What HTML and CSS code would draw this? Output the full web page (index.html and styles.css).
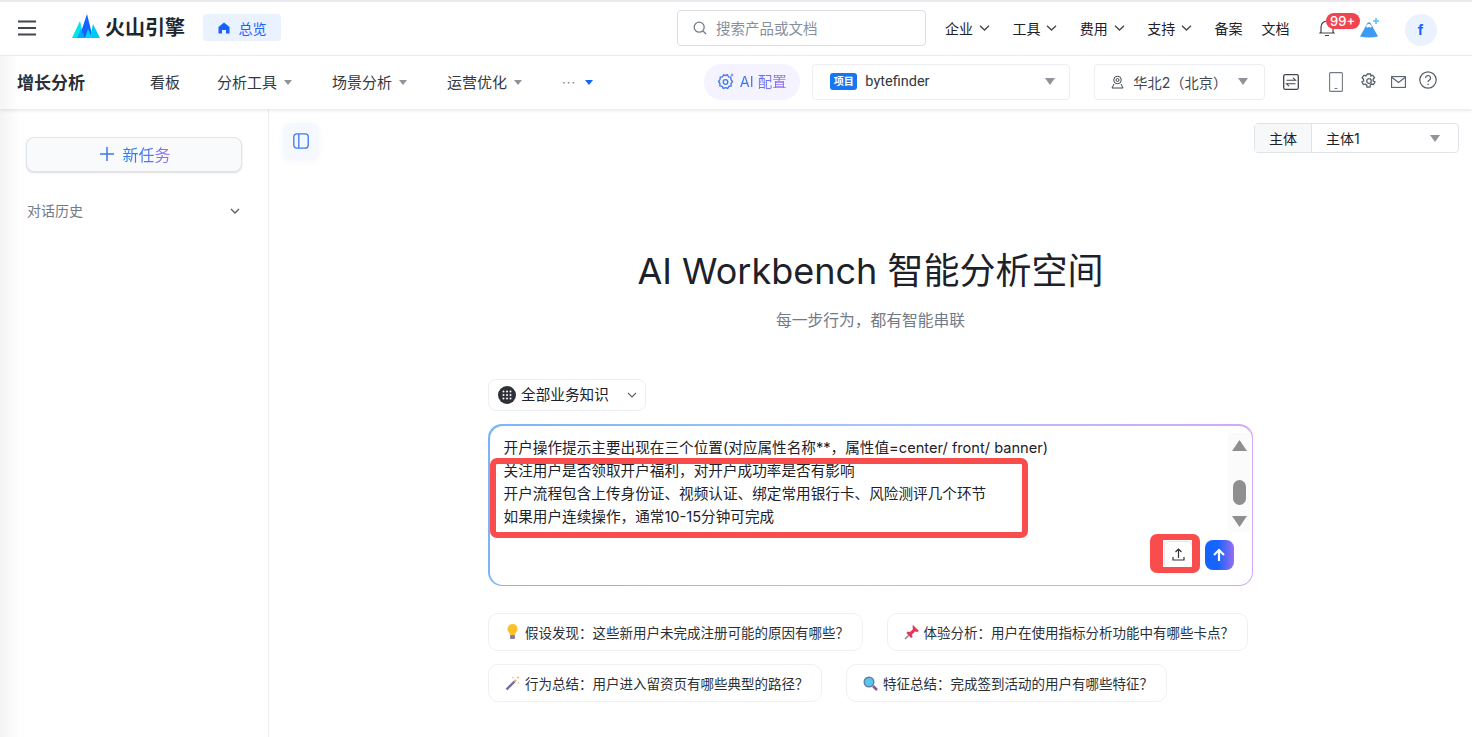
FILE: index.html
```html
<!DOCTYPE html>
<html lang="zh-CN">
<head>
<meta charset="utf-8">
<title>AI Workbench</title>
<link rel="stylesheet" href="styles.css">
</head>
<body>
<header class="top">
  <svg class="burger" width="20" height="16" viewBox="0 0 20 16"><path d="M1 1.500h18M1 8h18M1 14.500h18" stroke="#41464f" stroke-width="1.800" fill="none"/></svg>
  <svg class="logo" width="28" height="25" viewBox="0 0 28 25"><path d="M0 24 8 7l4 17z" fill="#00e5e5"/><path d="M7 24 15 0l6 24z" fill="#1664ff"/><path d="M18 24l3-14 7 14z" fill="#00c8f0"/><path d="M5 24l4-9 4 9z" fill="#00a6ff"/><path d="M13 24l3-9 4 9z" fill="#00d5f5"/></svg>
  <span class="brand">火山引擎</span>
  <span class="home"><svg width="12" height="12" viewBox="0 0 12 12"><path d="M6 .5 11.500 5v6.500H8V8H4v3.500H.5V5z" fill="#1664ff"/></svg>总览</span>
  <div class="search"><svg width="14" height="14" viewBox="0 0 14 14"><circle cx="6.200" cy="6.200" r="5" stroke="#737a87" stroke-width="1.300" fill="none"/><path d="m10 10 3 3" stroke="#737a87" stroke-width="1.300"/></svg><span>搜索产品或文档</span></div>
  <nav class="links">
    <a class="lnk">企业<svg class="chev" width="11" height="6" viewBox="0 0 11 6"><path d="m1 .7 4.500 4.300L10 .7" stroke="#41464f" stroke-width="1.300" fill="none"/></svg></a>
    <a class="lnk">工具<svg class="chev" width="11" height="6" viewBox="0 0 11 6"><path d="m1 .7 4.500 4.300L10 .7" stroke="#41464f" stroke-width="1.300" fill="none"/></svg></a>
    <a class="lnk">费用<svg class="chev" width="11" height="6" viewBox="0 0 11 6"><path d="m1 .7 4.500 4.300L10 .7" stroke="#41464f" stroke-width="1.300" fill="none"/></svg></a>
    <a class="lnk">支持<svg class="chev" width="11" height="6" viewBox="0 0 11 6"><path d="m1 .7 4.500 4.300L10 .7" stroke="#41464f" stroke-width="1.300" fill="none"/></svg></a>
    <a class="lnk">备案</a>
    <a class="lnk">文档</a>
  </nav>
  <div class="bell">
    <svg width="16" height="18" viewBox="0 0 16 18"><path d="M2 13V8a6 6 0 0 1 12 0v5l1 1H1zM6 16.500h4" stroke="#41464f" stroke-width="1.200" fill="none"/></svg>
    <span class="badge">99+</span>
  </div>
  <svg class="mount" width="20" height="20" viewBox="0 0 20 20"><path d="M0 18.500 7.500 5q1.500-1.500 3 0l7.500 13.500q-9 2-18 0z" fill="#3b9bf5"/><path d="M5.800 8.500q3-5.500 6.200 0l-1.600 1.300-1.400-1-1.500 1z" fill="#fff"/><path d="M16 0v6M13 3h6" stroke="#5cc0f5" stroke-width="1.600"/></svg>
  <span class="avatar">f</span>
</header>

<div class="sub">
  <span class="product">增长分析</span>
  <a class="item first">看板</a>
  <a class="item">分析工具<i class="tri small"></i></a>
  <a class="item">场景分析<i class="tri small"></i></a>
  <a class="item">运营优化<i class="tri small"></i></a>
  <a class="item dots">···<i class="tri small blue"></i></a>
  <span class="aibtn">
    <svg width="17" height="18" viewBox="0 0 17 18"><path d="M7 2.500 9.500 1.800 10.500 4l2.200.2.300 2.500 1.500 1.800-1.500 2 .2 2.400-2.300.5-1.200 2-2.200-.8-2.200.8-1.200-2-2.300-.6.200-2.300L.5 8.500l1.500-1.900.3-2.400L4.500 4l1-2.200z" stroke="#3c78f0" stroke-width="1.300" fill="none"/><circle cx="7.500" cy="9" r="2.300" stroke="#3c78f0" stroke-width="1.300" fill="none"/><path d="M14 0l.6 1.400L16 2l-1.400.6L14 4l-.6-1.400L12 2l1.400-.6z" fill="#8a6cf5"/></svg>
    <span class="aitext">AI 配置</span>
  </span>
  <div class="proj"><span class="tag">项目</span><span class="pname">bytefinder</span><i class="tri"></i></div>
  <div class="region">
    <svg width="13" height="14" viewBox="0 0 13 14"><circle cx="6.500" cy="5" r="3.800" stroke="#41464f" fill="none"/><circle cx="6.500" cy="5" r="1.500" stroke="#41464f" fill="none"/><path d="M3 9 1 13h11l-2-4" stroke="#41464f" fill="none"/></svg>
    <span class="rname">华北2（北京）</span><i class="tri"></i>
  </div>
  <svg class="ic swap" width="16" height="16" viewBox="0 0 16 16"><rect x=".7" y=".7" width="14.600" height="14.600" rx="1.500" stroke="#41464f" stroke-width="1.300" fill="none"/><path d="M3.500 6.200h9L10 3.800M12.500 9.800h-9L6 12.200" stroke="#41464f" stroke-width="1.100" fill="none"/></svg>
  <svg class="ic phone" width="14" height="20" viewBox="0 0 14 20"><rect x=".6" y=".6" width="12.800" height="18.800" rx="1" stroke="#737a87" stroke-width="1.100" fill="none"/><path d="M5.500 16.500h3" stroke="#737a87"/></svg>
  <svg class="ic gear" width="16" height="16" viewBox="0 0 16 16"><path d="M6.500 1h3l.4 2 1.800-.8 1.800 2.500-1.400 1.500.1 1.700 1.800 1-1.500 2.600-1.900-.5-1.400 1.100-.2 2h-3l-.2-2-1.500-1-1.900.5L.9 9l1.700-1-.1-1.700L1.100 4.800 3 2.200l1.900.8z" stroke="#565e6a" stroke-width="1.300" fill="none"/><circle cx="8" cy="8" r="2.300" stroke="#565e6a" stroke-width="1.300" fill="none"/></svg>
  <svg class="ic mail" width="15" height="12" viewBox="0 0 15 12"><rect x=".6" y=".6" width="13.800" height="10.800" stroke="#565e6a" stroke-width="1.100" fill="none"/><path d="m1 1.500 6.500 5 6.500-5" stroke="#565e6a" stroke-width="1.100" fill="none"/></svg>
  <svg class="ic help" width="18" height="18" viewBox="0 0 18 18"><circle cx="9" cy="9" r="8.200" stroke="#565e6a" stroke-width="1.200" fill="none"/><path d="M6.500 7a2.500 2.500 0 1 1 3.700 2.200c-.8.500-1.200.9-1.200 1.900" stroke="#565e6a" stroke-width="1.200" fill="none"/><circle cx="9" cy="13.300" r=".8" fill="#565e6a"/></svg>
</div>

<div class="layout">
  <aside class="side">
    <button class="newtask"><svg width="14" height="14" viewBox="0 0 14 14"><path d="M7 0v14M0 7h14" stroke="#3c78f0" stroke-width="1.500"/></svg><span class="gradtext">新任务</span></button>
    <div class="hist"><span>对话历史</span><svg class="histchev" width="10" height="6" viewBox="0 0 10 6"><path d="m1 1 4 4 4-4" stroke="#565e6a" stroke-width="1.300" fill="none"/></svg></div>
  </aside>
  <main class="main">
    <div class="tools">
      <span class="toggle"><svg width="16" height="16" viewBox="0 0 16 16"><rect x=".8" y=".8" width="14.400" height="14.400" rx="3" stroke="#3c78f0" stroke-width="1.300" fill="none"/><path d="M5.800 1v14" stroke="#3c78f0" stroke-width="1.300"/></svg></span>
      <div class="entity"><span class="elabel">主体</span><span class="evalue">主体1<i class="tri"></i></span></div>
    </div>
    <h1 class="title">AI Workbench 智能分析空间</h1>
    <p class="subtitle">每一步行为，都有智能串联</p>
    <div class="column">
      <div class="kb"><span class="kbdot"><svg width="10" height="10" viewBox="0 0 10 10" fill="#fff"><circle cx="1.500" cy="1.500" r="1"/><circle cx="5" cy="1.500" r="1"/><circle cx="8.500" cy="1.500" r="1"/><circle cx="1.500" cy="5" r="1"/><circle cx="5" cy="5" r="1"/><circle cx="8.500" cy="5" r="1"/><circle cx="1.500" cy="8.500" r="1"/><circle cx="5" cy="8.500" r="1"/><circle cx="8.500" cy="8.500" r="1"/></svg></span><span class="kbtext">全部业务知识</span><svg class="kbchev" width="10" height="6" viewBox="0 0 10 6"><path d="m1 1 4 4 4-4" stroke="#565e6a" stroke-width="1.100" fill="none"/></svg></div>
      <div class="composer">
        <div class="inner">
          <div class="lines">
            <div>开户操作提示主要出现在三个位置(对应属性名称**，属性值=center/ front/ banner)</div>
            <div>关注用户是否领取开户福利，对开户成功率是否有影响</div>
            <div>开户流程包含上传身份证、视频认证、绑定常用银行卡、风险测评几个环节</div>
            <div>如果用户连续操作，通常10-15分钟可完成</div>
          </div>
          <div class="scroll">
            <svg width="15" height="11" viewBox="0 0 15 11"><path d="M7.500 0 15 11H0z" fill="#8f8f8f"/></svg>
            <span class="thumb"></span>
            <svg width="15" height="11" viewBox="0 0 15 11"><path d="M7.500 11 15 0H0z" fill="#8f8f8f"/></svg>
          </div>
          <div class="actions">
            <span class="upload"><svg width="13" height="13" viewBox="0 0 13 13"><path d="M6.500 10V1.500M3.500 4l3-3 3 3M1 9v3h11V9" stroke="#333" stroke-width="1.200" fill="none"/></svg></span>
            <span class="send"><svg width="14" height="14" viewBox="0 0 14 14"><path d="M7 13V2M2 7l5-5 5 5" stroke="#fff" stroke-width="2.200" fill="none"/></svg></span>
          </div>
          <span class="mark mark-text"></span>
          <span class="mark mark-btn"></span>
        </div>
      </div>
      <div class="chips">
        <span class="chip"><svg width="15" height="16" viewBox="0 0 14 16"><path d="M7 0a5 5 0 0 1 3 9l-.5 2h-5L4 9a5 5 0 0 1 3-9z" fill="#fbc02d"/><rect x="4.500" y="11" width="5" height="4" rx="1" fill="#8d7aa8"/></svg>假设发现：这些新用户未完成注册可能的原因有哪些？</span>
        <span class="chip"><svg width="15" height="15" viewBox="0 0 15 15"><path d="m9 0 6 6-2 1-2-.5-3 3 .5 2.500-1.500 1L2.500 8l1-1.500L6 7l3-3-.5-2z" fill="#e8335a"/><path d="m5 10-4 4" stroke="#8a7f8a" stroke-width="1.500"/></svg>体验分析：用户在使用指标分析功能中有哪些卡点？</span>
        <span class="chip"><svg width="15" height="15" viewBox="0 0 15 15"><path d="m1.500 13.500 8-8" stroke="#7a6aa0" stroke-width="2.400"/><path d="m9.500 5.500 1.500-1.500" stroke="#e8b070" stroke-width="2.400"/><circle cx="13" cy="1.500" r="1" fill="#f2b36b"/><circle cx="8" cy="1.500" r=".8" fill="#f2b36b"/><circle cx="13.500" cy="7" r=".8" fill="#f2b36b"/></svg>行为总结：用户进入留资页有哪些典型的路径？</span>
        <span class="chip"><svg width="15" height="15" viewBox="0 0 15 15"><circle cx="6" cy="6" r="4.800" fill="#58c6ec" stroke="#5d7fa6" stroke-width="1.400"/><path d="m10 10 4 4" stroke="#8a5aa0" stroke-width="2.600"/></svg>特征总结：完成签到活动的用户有哪些特征？</span>
      </div>
    </div>
  </main>
</div>
</body>
</html>
```

FILE: styles.css
```css
* { box-sizing: border-box; }
html, body { margin: 0; height: 100%; }
body {
  height: 737px;
  overflow: hidden;
  background: #fff;
  color: #1d2129;
  font-family: "Inter", "Noto Sans CJK SC", "Noto Sans", sans-serif;
  font-size: 14px;
}
svg { display: block; flex: none; }

.top {
  height: 56px;
  border-top: 2px solid #e8e9ec;
  border-bottom: 1px solid #f2f3f5;
  display: flex;
  align-items: center;
  padding: 0 0 2px 17px;
}
.logo { margin-left: 35px; margin-top: -2px; }
.brand { margin-left: 5px; font-size: 20px; font-weight: 700; color: #20262e; line-height: 1; }
.home {
  margin-left: 18px;
  width: 78px; height: 27px;
  background: #eaf1ff;
  border-radius: 4px;
  display: flex; align-items: center; justify-content: center; gap: 9px;
  color: #1664ff;
  font-size: 14px;
}
.search {
  margin-left: 396px;
  width: 249px; height: 36px;
  border: 1px solid #dcdee3;
  border-radius: 4px;
  display: flex; align-items: center; gap: 9px;
  padding-left: 15px;
  color: #86909c;
  font-size: 14.500px;
}
.links { display: flex; align-items: center; margin-left: 19px; }
.lnk { display: flex; align-items: center; gap: 6px; font-size: 14px; color: #1d2129; margin-right: 22.400px; }
.lnk:nth-child(n+5) { margin-right: 19px; }
.bell { position: relative; margin-left: 10px; width: 16px; }
.badge {
  position: absolute; left: 7px; top: -6px;
  width: 34px; height: 16px;
  background: #f0444e; color: #fff;
  border-radius: 8px;
  font-size: 13px; font-weight: 500; line-height: 16px; text-align: center;
}
.mount { margin-left: 25px; }
.avatar {
  margin-left: 25px; margin-top: 4px;
  width: 32px; height: 32px; border-radius: 50%;
  background: #eaf1ff; color: #1664ff;
  font-weight: 700; font-size: 14px;
  display: flex; align-items: center; justify-content: center;
}

.sub {
  height: 53px;
  display: flex; align-items: center;
  padding: 0 0 2px 17px;
  background: linear-gradient(90deg, #f5f5f6 0, #fff 18px);
  box-shadow: 0 1px 4px rgba(0, 0, 0, .12);
  position: relative;
  z-index: 1;
}
.product { font-size: 17px; font-weight: 700; color: #2b2f36; width: 133px; }
.item { display: flex; align-items: center; font-size: 15px; color: #333840; margin-right: 40px; }
.item.first { margin-right: 37px; }
.tri { width: 0; height: 0; border-left: 5px solid transparent; border-right: 5px solid transparent; border-top: 7px solid #8f939a; }
.tri.small { margin-left: 7px; margin-top: 2px; border-left-width: 4px; border-right-width: 4px; border-top-width: 5px; }
.tri.blue { border-top-color: #1664ff; margin-left: 9px; }
.dots { color: #7a7f87; letter-spacing: 1px; margin-right: 0; font-size: 13px; }
.aibtn {
  margin-left: 111px;
  width: 96px; height: 36px; border-radius: 18px;
  background: #f4f3ff;
  display: flex; align-items: center; justify-content: center; gap: 5px;
}
.aitext {
  margin-bottom: 2px;
  font-size: 14.500px;
  background: linear-gradient(90deg, #2a78f5, #a46cf0);
  -webkit-background-clip: text; background-clip: text;
  color: transparent;
}
.proj {
  margin-left: 12px;
  width: 258px; height: 36px;
  border: 1px solid #eceef1; border-radius: 4px;
  display: flex; align-items: center; padding: 0 14px 0 17px;
}
.tag {
  width: 27px; height: 17px; border-radius: 3px;
  background: #1677f0; color: #fff;
  font-size: 10px; font-weight: 700; line-height: 17px; text-align: center;
}
.pname { margin-left: 8px; font-family: "Roboto", sans-serif; font-size: 14.500px; flex: 1; color: #333840; }
.region {
  margin-left: 24px;
  width: 171px; height: 36px;
  border: 1px solid #eceef1; border-radius: 4px;
  display: flex; align-items: center; padding: 0 16px 0 16px;
}
.rname { margin-left: 9px; flex: 1; font-size: 14.200px; color: #41464f; }
.swap { margin-left: 18px; }
.phone { margin-left: 30px; }
.gear { margin-left: 18px; margin-top: -2px; }
.mail { margin-left: 14px; }
.help { margin-left: 13px; margin-top: -3px; }

.layout { display: flex; height: 628px; }
.side {
  width: 269px; flex: none;
  border-right: 1px solid #eceef1;
  background: linear-gradient(90deg, #f3f3f4 0, #fff 20px);
  padding: 28px 26px 0 26px;
}
.newtask {
  width: 216px; height: 35px;
  border: 1px solid #e0e3ea; border-radius: 8px;
  background: #f9fafc;
  box-shadow: 0 1px 2px rgba(0, 0, 0, .14);
  display: flex; align-items: center; justify-content: center; gap: 8px;
  font: inherit; font-size: 16px;
  padding: 0 0 2px 3px;
}
.gradtext {
  background: linear-gradient(90deg, #2f7df5 30%, #a56cf0);
  -webkit-background-clip: text; background-clip: text;
  color: transparent;
}
.hist {
  margin-top: 28px;
  display: flex; align-items: center; justify-content: space-between;
  padding: 0 2px 0 1px;
  color: #737a87; font-size: 14px;
}
.histchev { margin-top: 2px; }
.main { flex: 1; display: flex; flex-direction: column; align-items: center; min-width: 0; }
.tools {
  align-self: stretch;
  display: flex; justify-content: space-between; align-items: flex-start;
  padding: 14px 13px 0 14px;
}
.toggle {
  width: 36px; height: 36px; border-radius: 8px;
  background: #f5f8ff;
  box-shadow: 0 2px 6px rgba(30, 80, 200, .06);
  display: flex; align-items: center; justify-content: center;
}
.entity {
  width: 205px; height: 30px;
  border: 1px solid #e0e3ea; border-radius: 4px;
  display: flex; font-size: 14px;
}
.elabel { width: 57px; background: #f7f8fa; border-right: 1px solid #e0e3ea; display: flex; align-items: center; justify-content: center; }
.evalue { flex: 1; display: flex; align-items: center; justify-content: space-between; padding: 0 18px 0 14px; }
.title { margin: 87px 0 0; font-size: 36px; font-weight: 400; line-height: 50px; color: #1d2129; }
.subtitle { margin: 13px 0 0; font-size: 15.750px; line-height: 24px; color: #737a87; }
.column { width: 765px; margin-top: 46px; }
.kb {
  width: 158px; height: 32px;
  border: 1px solid #eceef1; border-radius: 8px;
  display: flex; align-items: center; padding-left: 9px;
  font-size: 14.640px;
}
.kbdot { width: 18px; height: 18px; border-radius: 50%; background: #2e3138; display: flex; align-items: center; justify-content: center; margin-right: 5px; }
.kbtext { margin-bottom: 3px; }
.kbchev { margin-left: 18px; }
.composer {
  margin-top: 13px;
  height: 162px;
  border-radius: 14px;
  padding: 1.500px;
  background: linear-gradient(90deg, #7cb5f6 0%, #a9c4fa 50%, #d5a8f5 100%);
}
.inner {
  position: relative;
  height: 100%;
  background: #fff;
  border-radius: 13px;
  padding: 11.500px 0 0 14px;
  display: flex;
}
.lines { flex: 1; font-size: 14.640px; line-height: 23px; color: #1d2129; }
.scroll {
  width: 22px; height: 99px;
  margin: -4px 1.500px 0 0;
  background: #fbfbfb;
  display: flex; flex-direction: column; align-items: center; justify-content: space-between;
  padding: 7px 0 5px;
}
.thumb { width: 13px; height: 25px; border-radius: 7px; background: #8f8f8f; margin-top: 18px; }
.actions { position: absolute; right: 18px; bottom: 15px; display: flex; align-items: center; gap: 12px; }
.upload {
  width: 29px; height: 28px;
  border: 1px solid #e5e6eb; border-radius: 6px;
  display: flex; align-items: center; justify-content: center;
}
.send {
  width: 29px; height: 30px; border-radius: 8px;
  background: linear-gradient(90deg, #1664ff 45%, #9a6cf0);
  display: flex; align-items: center; justify-content: center;
}
.mark { position: absolute; border-style: solid; border-color: #f94c4c; border-radius: 7px; pointer-events: none; }
.mark-text { left: 0; top: 32.500px; width: 538px; height: 80px; border-width: 6px; }
.mark-btn { right: 51.500px; bottom: 11.500px; width: 50px; height: 39px; border-width: 6px 8px 6px 13px; }
.chips { margin-top: 27px; display: flex; flex-wrap: wrap; gap: 13px 24px; }
.chip {
  height: 38px;
  border: 1px solid #eff0f3; border-radius: 10px;
  display: flex; align-items: center; gap: 5px;
  padding: 0 12.500px 0 16px;
  font-size: 13.500px;
  color: #2b2f36;
  white-space: nowrap;
}
```
